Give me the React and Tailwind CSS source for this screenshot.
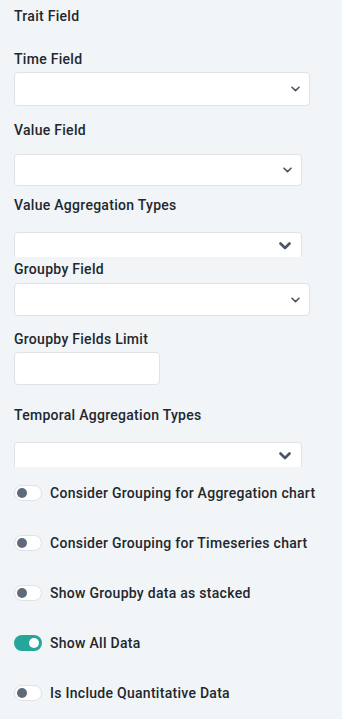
import React from "react";

const font = { fontFamily: "Roboto, 'Noto Sans', sans-serif" };

function ChevronSmall() {
  return (
    <svg width="9" height="6" viewBox="0 0 9 6" className="absolute right-[9px] top-1/2 -translate-y-1/2">
      <path d="M1 1.2 L4.5 4.6 L8 1.2" fill="none" stroke="#4b5563" strokeWidth="1.6" strokeLinecap="round" strokeLinejoin="round" />
    </svg>
  );
}

function ChevronBold() {
  return (
    <svg width="12" height="8" viewBox="0 0 12 8" className="absolute right-[10px] top-[9px]">
      <path d="M1.5 1.5 L6 6 L10.5 1.5" fill="none" stroke="#4b5563" strokeWidth="2.6" strokeLinecap="round" strokeLinejoin="round" />
    </svg>
  );
}

const textCls = "text-[14px] font-medium text-[#22272e] tracking-[0.28px]";

function Label({ children, className = "" }) {
  return <div className={"h-5 leading-5 " + textCls + " " + className}>{children}</div>;
}

function Select({ w, h, className = "" }) {
  return (
    <div className={"relative bg-white border border-[#dfe3e8] rounded-[4px] " + w + " " + h + " " + className}>
      <ChevronSmall />
    </div>
  );
}

function ClippedSelect({ className = "" }) {
  return (
    <div className={"h-[25px] overflow-hidden " + className}>
      <div className="relative w-[288px] h-[34px] bg-white border border-[#dfe3e8] rounded-[4px]">
        <ChevronBold />
      </div>
    </div>
  );
}

function Toggle({ on, label }) {
  return (
    <div className="h-[50px] flex items-center gap-2">
      {on ? (
        <div className="w-[28px] h-[16px] rounded-full bg-[#26a69a] flex items-center justify-end pr-[3px]">
          <div className="w-[10px] h-[10px] rounded-full bg-white" />
        </div>
      ) : (
        <div className="w-[28px] h-[16px] rounded-full bg-white border border-[#dfe3e8] flex items-center pl-[2px]">
          <div className="w-[10px] h-[10px] rounded-full bg-[#5f6b7a]" />
        </div>
      )}
      <span className={"leading-5 " + textCls}>{label}</span>
    </div>
  );
}

export default function App() {
  return (
    <div style={font} className="w-[342px] h-[719px] bg-[#f1f5f8] px-[14px] overflow-hidden">
      <div className="flex flex-col">
        <Label className="mt-[6px]">Trait Field</Label>
        <Label className="mt-[23px]">Time Field</Label>
        <Select w="w-[296px]" h="h-[34px]" className="mt-[3px]" />
        <Label className="mt-[14px]">Value Field</Label>
        <Select w="w-[288px]" h="h-[32px]" className="mt-[14px]" />
        <Label className="mt-[9px]">Value Aggregation Types</Label>
        <ClippedSelect className="mt-[17px]" />
        <Label className="mt-[2px]">Groupby Field</Label>
        <Select w="w-[296px]" h="h-[33px]" className="mt-[4px]" />
        <Label className="mt-[13px]">Groupby Fields Limit</Label>
        <div className="mt-[3px] w-[146px] h-[33px] bg-white border border-[#dfe3e8] rounded-[4px]" />
        <Label className="mt-[20px]">Temporal Aggregation Types</Label>
        <ClippedSelect className="mt-[17px]" />
        <div className="mt-px flex flex-col">
          <Toggle label="Consider Grouping for Aggregation chart" />
          <Toggle label="Consider Grouping for Timeseries chart" />
          <Toggle label="Show Groupby data as stacked" />
          <Toggle on label="Show All Data" />
          <Toggle label="Is Include Quantitative Data" />
        </div>
      </div>
    </div>
  );
}
